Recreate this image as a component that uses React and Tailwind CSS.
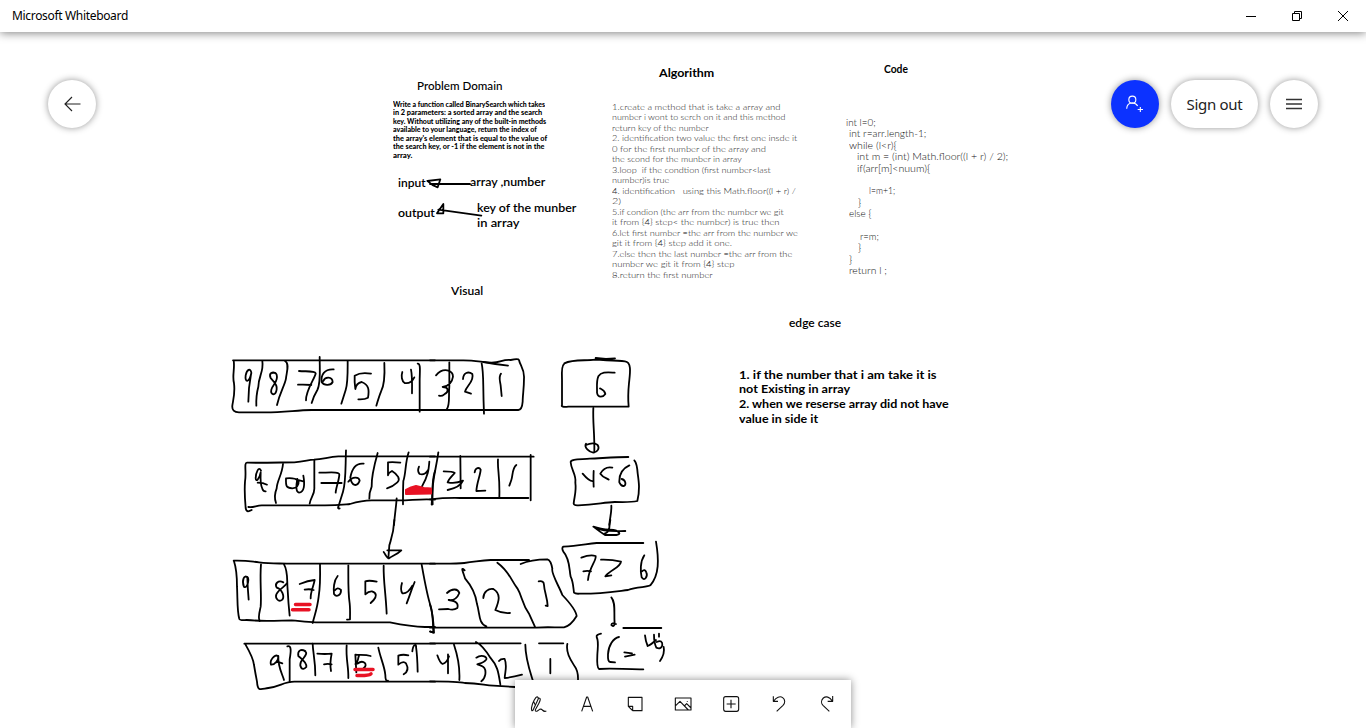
import { useLayoutEffect, useRef } from "react";

// A line of board writing, fitted horizontally to the width it takes on the board.
function Line({ text, width }) {
  const ref = useRef(null);
  useLayoutEffect(() => {
    const el = ref.current;
    if (text && width) el.style.transform = `scaleX(${width / el.offsetWidth})`;
  }, [text, width]);
  return (
    <div className="w-0">
      <span ref={ref} className="inline-block origin-left whitespace-pre">{text || " "}</span>
    </div>
  );
}

function Note({ className, lines }) {
  return (
    <div className={`absolute font-["Lato",sans-serif] ${className}`}>
      {lines.map(([text, width, indent = 0], i) => (
        <div key={i} className="h-[1lh]" style={{ paddingLeft: indent }}>
          <Line text={text} width={width} />
        </div>
      ))}
    </div>
  );
}

const problem = [
  ["Write a function called BinarySearch which takes", 152],
  ["in 2 parameters: a sorted array and the search", 149],
  ["key. Without utilizing any of the built-in methods", 153],
  ["available to your language, return the index of", 144],
  ["the array's element that is equal to the value of", 154],
  ["the search key, or -1 if the element is not in the", 151],
  ["array.", 19],
];

const algorithm = [
  ["1.create a method that is take a array and", 168],
  ["number i wont to serch on it and this method", 174],
  ["return key of the number", 97],
  ["2. identification two value the first one insde it", 185],
  ["0 for the first number of the array and", 154],
  ["the scond for the munber in array", 130],
  ["3.loop  if the condtion (first number<last", 159],
  ["number)is true", 57],
  ["4. identification   using this Math.floor((l + r) /", 184],
  ["2)", 9],
  ["5.if condion (the arr from the number we git", 172],
  ["it from {4} step< the number) is true then", 168],
  ["6.let first number =the arr from the number we", 186],
  ["git it from {4} step add it one.", 120],
  ["7.else then the last number =the arr from the", 180],
  ["number we git it from {4} step", 122],
  ["8.return the first number", 101],
];

const code = [
  ["int l=0;", 29.5],
  ["int r=arr.length-1;", 77, 3],
  ["while (l<r){", 47, 3],
  ["int m = (int) Math.floor((l + r) / 2);", 151, 11.5],
  ["if(arr[m]<nuum){", 73, 11.5],
  [""],
  ["l=m+1;", 26, 23],
  ["}", 3.5, 12],
  ["else {", 22, 3],
  [""],
  ["r=m;", 19, 14],
  ["}", 3.5, 12],
  ["}", 3.5, 3],
  ["return l ;", 38, 3],
];

// Ink strokes, grouped by board area; units are thirds of a pixel.
const ink = [
  {
    at: "translate(225 345) scale(.33333)",
    d: [
      "M24 46H630 M26 46C30 75 21 90 27 115C31 145 24 165 22 182Q20 202 42 202H120C180 202 210 196 260 195H630",
      "M112 48C117 80 100 95 100 125Q93 150 94 182 M180 48C195 55 184 85 183 100C180 120 165 140 156 180 M284 36C284 75 288 115 277 135Q265 155 260 174 M368 48C368 80 369 115 362 135L349 176 M478 54C480 95 476 125 468 140Q462 155 454 182 M578 56C588 55 584 80 584 110V200",
      "M79 83C76 68 66 73 62 91C59 112 72 116 79 84C74 110 70 125 70 170",
      "M151 85C144 79 130 84 137 99C142 107 158 115 155 133C152 154 135 151 139 134C143 117 161 110 155 89Q152 80 143 84",
      "M222 78C242 80 269 76 272 85C271 98 242 135 243 166 M219 119Q242 118 259 120",
      "M326 73C298 71 287 91 290 111C298 124 318 121 323 111C322 94 300 94 295 108",
      "M438 86C415 82 397 87 389 92Q388 110 391 132Q394 114 410 111C432 119 433 135 429 158C419 164 411 163 400 163",
      "M532 81C528 93 530 108 539 114C550 116 560 113 568 97 M558 74Q562 91 561 145",
      "M68 353C110 354 180 352 208 352C240 350 250 344 267 344C295 342 311 336 340 334H630 M66 353C56 353 65 380 60 410C58 438 59 457 62 489C64 502 71 500 80 495",
      "M70 486C85 489 94 481 110 481H300C335 481 351 479 375 477Q410 466 440 466H510C550 468 585 460 630 464",
      "M174 357C171 390 156 407 155 430C149 445 148 460 153 474 M268 345V431C268 450 256 458 254 476 M363 316C361 370 363 410 354 440L340 485Q337 492 344 490 M458 324C445 370 439 397 440 425Q432 444 433 461 M551 322C540 355 543 385 535 408Q534 433 534 478 M630 378Q620 405 623 478",
      "M108 377C101 362 93 382 92 399C92 413 103 403 107 382C106 404 106 420 112 431Q115 440 122 439 M98 413Q115 413 126 419",
      "M183 400C182 425 184 428 202 430C215 430 222 421 221 407Q208 397 183 400 M217 402C214 418 211 441 222 443C238 442 240 419 235 392 M215 404L235 409",
      "M283 383C310 383 344 379 343 389C342 407 333 427 332 443 M289 414H350",
      "M416 356C391 353 381 371 376 397C380 425 397 426 404 407C402 394 382 394 370 410",
      "M526 353Q504 350 489 352V391Q489 384 501 378C519 389 527 403 517 412Q502 426 486 430",
      "M582 365Q576 379 584 387C596 391 604 384 610 374 M613 350C611 375 610 390 591 424",
      "M515 460C513 490 510 500 507 540",
    ],
  },
  {
    at: "translate(430 345) scale(.33333)",
    d: [
      "M0 46H100C135 46 154 51 185 53C214 53 215 43 242 45Q265 40 267 45C270 62 284 72 282 100C282 130 278 152 278 170Q276 195 265 195H0",
      "M160 51Q197 58 234 62 M18 91C40 65 69 76 69 95C66 115 54 124 38 126C57 127 57 140 43 148Q35 155 27 152 M58 52V125C55 152 61 182 50 193 M155 55C162 88 158 112 162 206 M99 102C100 83 115 78 127 87C134 108 109 123 105 140L123 146 M213 86C205 96 210 107 212 122L215 153",
      "M497 39Q512 41 528 42L555 40 M403 55C430 42 464 48 495 44C532 46 562 47 585 49C606 51 600 86 597 114Q593 154 596 185H415Q391 187 396 181V103C395 84 394 61 403 56",
      "M554 83C530 82 514 80 505 94C498 110 502 131 501 143C504 161 520 156 526 147C524 135 516 133 510 130 M490 189C488 235 494 260 493 322",
      "M468 296C461 307 478 321 490 323C504 320 510 309 502 299C490 292 477 296 468 300",
      "M0 335H311 M0 463Q45 458 90 459H295 M302 330V466 M91 333L92 430 M204 343C202 375 210 390 208 456 M25 322C20 360 9 400 8 430L5 479",
      "M41 379C50 379 69 379 74 384C69 391 57 400 53 412Q76 417 99 407C92 424 72 431 53 435 M134 382C136 367 148 366 152 374C151 391 141 411 139 438Q149 438 166 437 M259 360C246 370 249 391 244 405L238 422",
      "M595 336C555 336 510 340 479 341C460 344 420 340 422 352C423 374 440 390 436 413C440 440 432 459 431 476Q432 482 445 481C500 479 520 472 554 471C585 472 614 470 622 468C630 435 627 413 623 385Q621 355 613 346",
      "M458 386C469 399 483 411 490 408 M491 378Q490 403 491 425 M547 368Q524 363 511 386C519 398 532 400 536 404 M598 361C578 370 567 389 568 412C576 429 588 424 586 413Q584 404 575 402 M544 482C545 503 540 515 538 540",
    ],
  },
  {
    at: "translate(225 520) scale(.33333)",
    d: [
      "M508 0C506 40 499 55 493 76L490 115 M476 96C483 106 487 116 492 115C501 107 516 104 529 91H487",
      "M26 122C70 121 80 125 102 127C137 131 160 130 185 131H630 M27 124C34 145 36 178 36 200C38 235 36 275 43 297Q45 302 65 300C115 305 170 301 200 301C225 303 245 307 272 307H495C535 315 567 320 600 321H630",
      "M108 133C104 180 110 225 107 260C104 275 98 291 104 303 M177 133C190 155 185 180 188 210Q190 250 194 287 M285 133C286 172 285 205 281 230C277 265 269 285 263 309 M370 136C370 190 369 220 374 250C376 269 375 291 375 298L366 299 M476 137C475 185 482 215 485 281 M590 134C600 190 607 230 617 258Q625 290 627 338L616 335",
      "M68 173C58 161 49 182 57 201C69 205 73 176 67 171Q68 206 71 239",
      "M175 187C160 179 148 191 155 203C172 208 179 230 172 239C160 249 150 233 154 223C162 207 180 200 186 190",
      "M224 192Q249 182 269 180C266 198 256 216 257 235 M239 209Q254 206 266 210",
      "M338 168C326 182 325 208 327 222C335 234 349 224 348 210Q337 200 330 211",
      "M455 185Q432 180 421 184V223Q431 213 441 214C457 218 454 232 446 240L437 249",
      "M531 189Q525 209 532 220C544 222 552 215 562 197 M569 186C558 212 553 231 545 250",
      "M58 371H630 M60 371C75 397 85 414 87 435Q92 465 96 485C98 515 105 508 130 504C165 500 178 484 210 485H630",
      "M187 379C200 374 198 395 194 418V485 M263 371C264 400 271 420 271 466 M365 376C362 415 371 440 370 474 M460 383C466 414 479 439 481 465Q481 486 489 482 M562 394C564 373 574 370 573 380Q577 407 578 455",
      "M158 408C149 401 133 422 138 434C150 435 161 420 160 408C158 440 172 462 177 480 M150 429Q154 423 172 430",
      "M241 393C227 386 217 392 220 408C231 417 247 428 244 441C231 455 222 439 228 425C237 411 252 399 238 393",
      "M277 401Q300 403 320 401C317 415 314 431 318 453 M297 433Q308 430 320 433",
      "M437 408C420 403 404 406 391 404L394 457 M402 407C397 420 400 428 391 432 M397 431C417 416 430 436 416 444",
      "M550 406Q533 402 520 407V434Q535 421 543 430C553 448 546 457 536 463",
    ],
  },
  {
    at: "translate(430 520) scale(.33333)",
    d: [
      "M541 0Q538 13 538 23Q535 38 525 40 M490 20C520 31 542 28 557 31C571 38 572 43 559 45H525Q509 35 490 20 M500 25Q520 36 586 33",
      "M640 69H500C468 72 445 78 400 80Q394 83 400 95C421 118 417 150 422 170C430 186 430 205 432 218Q436 222 449 221C510 222 559 214 594 210C620 199 651 203 661 196C688 165 687 119 678 65",
      "M454 113Q480 103 497 108C500 122 477 142 474 180 M460 154Q472 151 483 154 M513 119Q545 118 573 125C571 143 542 149 526 169L544 166 M643 106C630 125 631 155 635 172C644 186 654 168 649 157Q644 145 636 154",
      "M0 131C40 131 80 132 103 129C145 124 155 121 182 120H297 M0 323H318C350 320 382 323 402 322C420 318 434 298 440 288C438 273 417 246 397 225C387 198 362 159 367 146Q363 121 352 118C322 118 296 121 272 132 M104 151C90 137 100 158 105 175C125 198 137 221 141 252C150 281 145 310 169 319 M202 128C238 154 242 179 262 205C278 231 274 249 298 283L316 323",
      "M0 254Q9 277 10 338L0 334 M51 219C68 203 84 207 88 219C82 234 70 242 56 240C83 243 85 254 82 264Q71 272 55 267L27 268 M160 234C160 216 176 204 190 207C214 221 207 244 196 270Q216 281 240 279 M326 184Q342 181 342 195C343 215 352 232 353 258L347 257",
      "M544 232C558 249 551 274 554 313Q550 322 544 315Q545 307 558 312 M580 324H694 M513 341Q498 344 500 351C507 366 503 382 502 405Q500 443 507 447C550 443 585 449 640 448 M567 351C550 354 535 377 534 403Q533 427 541 426L555 427 M583 397L606 400 M585 410L614 404",
      "M645 346Q647 365 653 378Q663 374 678 360 M672 344Q672 368 679 383Q693 389 697 376Q698 358 680 366 M687 341V350 M701 381C704 394 701 407 690 423",
      "M0 370H120L272 370 M327 370H400 M0 484Q86 484 104 489C147 489 161 495 190 497L255 501 M72 374C85 413 90 445 88 480 M138 366C152 373 171 397 181 413C203 438 205 456 211 493 M286 374C286 413 297 445 308 480 M412 372C407 399 423 421 434 439Q445 454 444 480",
      "M22 406Q30 430 38 432C49 429 53 422 57 409 M54 403V460 M139 413C153 403 172 409 169 418C164 427 151 430 142 433C164 438 168 447 166 463Q163 478 154 484 M207 423Q212 416 224 417C232 436 226 451 224 474Q247 472 276 464 M361 417V460",
    ],
  },
  {
    at: "translate(380 70) scale(.33333)",
    d: ["M270 342H150 M142 333L181 328L173 352Q158 348 144 334 M304 437L175 419 M171 430L190 402V430Z"],
  },
];

const tools = [
  { name: "Pen", box: "15 30 144 144", d: "M65 122C62 112 70 92 78 82Q84 78 85 86L69 121L65 123M71 94L75 104M85 84C94 83 91 92 86 101L76 119Q75 126 82 123L89 118Q94 116 97 120Q103 126 109 123" },
  { name: "Text", box: "159 30 144 144", d: "M215 124L230 81H233L248 124M221 109H242" },
  { name: "Sticky note", box: "303 30 144 144", d: "M355 82H396V122H368L355 109ZM355 109H368V122M358 112L366 120" },
  { name: "Image", box: "447 30 144 144", d: "M496 84H543V120H496ZM497 107L510 94L535 120M523 108L530 101L543 114M532 93V95" },
  { name: "Insert", box: "591 30 144 144", d: "M647 80H680Q686 80 686 86V118Q686 124 680 124H647Q641 124 641 118V86Q641 80 647 80ZM663 89V115M650 102H677" },
  { name: "Undo", box: "735 30 144 144", d: "M790 79V94H804M791 93C799 82 810 77 818 83C826 89 826 99 819 106L800 124" },
  { name: "Redo", box: "879 30 144 144", d: "M968 78V94H953M967 93C959 80 948 78 940 84C933 91 933 100 939 106L958 124" },
];

export default function App() {
  return (
    <div className='relative flex h-[728px] w-[1366px] flex-col overflow-hidden bg-white font-["Noto_Sans",sans-serif] text-black'>
      <svg className="absolute inset-0" width="1366" height="728" fill="none">
        <g stroke="#000" strokeWidth="5.4" strokeLinecap="round" strokeLinejoin="round">
          {ink.map((g) => (
            <g key={g.at} transform={g.at}>
              {g.d.map((d) => <path key={d} d={d} />)}
            </g>
          ))}
        </g>
        <g stroke="#e81224" strokeLinecap="round" strokeLinejoin="round">
          <path d="M406 490L411 487.500L416 486L420 487L424 488L431 488.500V493.500L406 494Z" fill="#e81224" strokeWidth="2" />
          <path d="M295.500 604.500H310M292.500 609.700H309M355 669.500H373M357 675.500Q368 676 371 673.800" strokeWidth="3.5" />
        </g>
      </svg>

      <Note className="left-[417px] top-[78px] text-[12px] leading-4 font-medium" lines={[["Problem Domain", 85]]} />
      <Note className="left-[393px] top-[99.5px] text-[7px] leading-[8.55px] font-black" lines={problem} />
      <Note className="left-[398px] top-[175px] text-[12px] leading-4 font-semibold" lines={[["input", 28]]} />
      <Note className="left-[470px] top-[174px] text-[12px] leading-4 font-semibold" lines={[["array ,number", 75]]} />
      <Note className="left-[398px] top-[205px] text-[12px] leading-4 font-semibold" lines={[["output", 37]]} />
      <Note className="left-[477px] top-[200px] text-[12px] leading-[15px] font-semibold" lines={[["key of the munber", 99], ["in array", 43]]} />
      <Note className="left-[659px] top-[65px] text-[12px] leading-4 font-bold" lines={[["Algorithm", 55]]} />
      <Note className="left-[612px] top-[101.5px] text-[8.5px] leading-[10.5px] font-light text-[#222]" lines={algorithm} />
      <Note className="left-[884px] top-[61px] text-[12px] leading-4 font-bold" lines={[["Code", 24]]} />
      <Note className="left-[845.5px] top-[117px] text-[9px] leading-[11.4px] font-light text-[#111]" lines={code} />
      <Note className="left-[451px] top-[283px] text-[12px] leading-4 font-semibold" lines={[["Visual", 32]]} />
      <Note className="left-[789px] top-[315px] text-[12px] leading-4 font-semibold" lines={[["edge case", 52]]} />
      <Note
        className="left-[738.5px] top-[367.500px] text-[12px] leading-[14.8px] font-bold"
        lines={[
          ["1. if the number that i am take it is", 198],
          ["not Existing in array", 111],
          ["2. when we reserse array did not have", 210],
          ["value in side it", 79],
        ]}
      />

      <header className="relative flex h-8 shrink-0 items-center justify-between bg-white pl-3 shadow-[0_1px_10px_rgba(0,0,0,0.5)]">
        <h1 className="whitespace-nowrap text-[12px] leading-4 tracking-[-0.33px]">Microsoft Whiteboard</h1>
        <svg className="h-8 w-[138px]" viewBox="0 0 138 32" fill="none" stroke="#000" strokeWidth="1">
          <path d="M18 16.5H28M64.500 13.500H71.500V20.500H64.500ZM66.500 13.500V11.500H73.500V18.500H71.500M110 11L120 21M120 11L110 21" />
        </svg>
      </header>

      <div className="relative flex items-center justify-between pl-12 pr-12 pt-12">
        <button aria-label="Back" className="flex size-12 items-center justify-center rounded-full bg-white shadow-[0_0_7px_rgba(0,0,0,0.42)]">
          <svg width="18" height="18" viewBox="0 0 18 18" fill="none" stroke="#222" strokeWidth="1.15"><path d="M17.500 9H1.500M9 2L2 9L9 16" /></svg>
        </button>
        <div className="flex gap-3">
          <button aria-label="Invite" className="flex size-12 items-center justify-center rounded-full bg-[#0c32ff] shadow-[0_0_7px_rgba(0,0,0,0.42)]">
            <svg width="48" height="48" viewBox="63 240 144 144" fill="none" stroke="#fff" strokeWidth="3.3">
              <circle cx="127" cy="299" r="10.500" /><path d="M110 326Q111 309 127 309Q138 309 143 318M151 321V336M143 328.500H159" />
            </svg>
          </button>
          <button className="flex h-12 w-[87px] items-center justify-center rounded-full bg-white pt-px text-[15px] tracking-[-0.3px] text-[#222] shadow-[0_0_7px_rgba(0,0,0,0.42)]">Sign out</button>
          <button aria-label="Menu" className="flex size-12 items-center justify-center rounded-full bg-white shadow-[0_0_7px_rgba(0,0,0,0.42)]">
            <svg width="16" height="12" viewBox="0 0 16 12" stroke="#333" strokeWidth="1.300"><path d="M0 1.500H16M0 6H16M0 10.500H16" /></svg>
          </button>
        </div>
      </div>

      <nav className="relative mt-auto ml-[515px] flex h-12 w-[336px] bg-white shadow-[0_0_8px_rgba(0,0,0,0.45)]">
        {tools.map((t) => (
          <button key={t.name} aria-label={t.name} className="size-12">
            <svg width="48" height="48" viewBox={t.box} fill="none" stroke="#111" strokeWidth="3.3" strokeLinejoin="round"><path d={t.d} /></svg>
          </button>
        ))}
      </nav>
    </div>
  );
}
